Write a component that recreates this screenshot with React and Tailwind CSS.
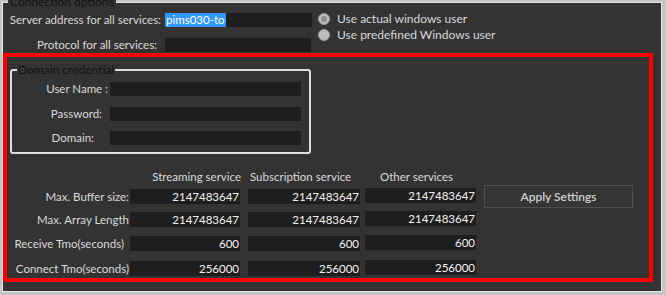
import React from "react";

const font = { fontFamily: 'Lato, "Open Sans", Arial, sans-serif' };

const Field = ({ w, value, className = "" }) => (
  <div
    className={`h-[15px] ${w} bg-[#1e1e1e] text-right text-[11.5px] leading-[15px] text-[#f4f4f4] pr-[1px] ${className}`}
  >
    {value}
  </div>
);

const Radio = ({ checked, label }) => (
  <div className="flex items-center h-[16px]">
    <div className="w-[12px] h-[12px] rounded-full bg-[#bdbdbd] border border-[#9a9a9a] flex items-center justify-center">
      <div
        className={`w-[6px] h-[6px] rounded-full ${checked ? "bg-[#8c8c8c]" : "bg-[#bdbdbd]"}`}
      />
    </div>
    <span className="ml-[7px] text-[12px] leading-[14px] text-[#dadada]">{label}</span>
  </div>
);

const rows = [
  { label: "Max. Buffer size:", pr: "pr-[1px]", vals: ["2147483647", "2147483647", "2147483647"] },
  { label: "Max. Array Length", pr: "pr-[1px]", vals: ["2147483647", "2147483647", "2147483647"] },
  { label: "Receive Tmo(seconds)", pr: "pr-[6px]", vals: ["600", "600", "600"] },
  { label: "Connect Tmo(seconds)", pr: "pr-[1px]", vals: ["256000", "256000", "256000"] },
];

const rowMargins = ["mt-[4px]", "mt-[9px]", "mt-[10px]"];

const txt = "text-[11.5px] leading-[14px] text-[#dadada]";

export default function App() {
  return (
    <div className="w-[666px] h-[295px] bg-[#c6c6c6] pt-[2px] pl-[2px] pr-[4px] pb-[3px]" style={font}>
      <div className="relative h-full bg-[#333333] border border-[#e2e2e2]">
        <span className="absolute left-[5px] top-[-8px] px-[2px] bg-[#333333] text-[12px] leading-[14px] text-[#111111]">
          Connection options
        </span>

        {/* top section */}
        <div className="flex pt-[10px]">
          <div className="flex flex-col ml-[6px]">
            <div className="flex items-center h-[14px]">
              <span className={`w-[152px] text-right whitespace-nowrap ${txt}`}>
                Server address for all services:
              </span>
              <div className="ml-[4px] w-[147px] h-[14px] bg-[#1e1e1e] flex">
                <span className="bg-[#3297fd] text-white text-[11.5px] leading-[14px] px-[1px]">pims030-to</span>
              </div>
            </div>
            <div className="flex items-center h-[14px] mt-[11px]">
              <span className={`w-[148px] text-right whitespace-nowrap ${txt}`}>
                Protocol for all services:
              </span>
              <div className="ml-[8px] w-[146px] h-[14px] bg-[#1e1e1e]" />
            </div>
          </div>
          <div className="ml-[6px] -mt-[2px] flex flex-col">
            <Radio checked label="Use actual windows user" />
            <Radio label="Use predefined Windows user" />
          </div>
        </div>

        {/* highlighted region */}
        <div className="mt-[1px] w-[650px] h-[229px] border-4 border-[#ff0000]">
          <div className="relative ml-[3px] mt-[12px] w-[301px] h-[85px] border-2 border-[#dedede] rounded-[3px]">
            <span className="absolute left-[5px] top-[-8px] px-[1px] bg-[#333333] text-[12px] leading-[14px] text-[#111111]">
              Domain credential
            </span>
            <div className="flex items-center h-[14px] mt-[11px]">
              <span className={`w-[98px] text-right pr-[2px] ${txt}`}>User Name :</span>
              <div className="w-[191px] h-[14px] bg-[#1e1e1e]" />
            </div>
            <div className="flex items-center h-[14px] mt-[11px]">
              <span className={`w-[98px] text-right pr-[8px] ${txt}`}>Password:</span>
              <div className="w-[191px] h-[14px] bg-[#1e1e1e]" />
            </div>
            <div className="flex items-center h-[14px] mt-[10px]">
              <span className={`w-[98px] text-right pr-[16px] ${txt}`}>Domain:</span>
              <div className="w-[191px] h-[14px] bg-[#1e1e1e]" />
            </div>
          </div>

          {/* settings table */}
          <div className={`flex mt-[16px] h-[14px] items-center whitespace-nowrap ${txt}`}>
            <div className="w-[123px]" />
            <div className="w-[111px] text-right">Streaming service</div>
            <div className="ml-[8px] w-[112px] pl-[1px]">Subscription service</div>
            <div className="ml-[5px] w-[111px] pl-[14px]">Other services</div>
          </div>

          {rows.map((r, i) => (
            <div
              key={r.label}
              className={`flex items-center ${i === 0 ? "mt-[1px] h-[23px]" : `${rowMargins[i - 1]} h-[15px]`}`}
            >
              <div className={`w-[123px] text-right whitespace-nowrap ${r.pr} ${txt}`}>
                {r.label}
              </div>
              <Field w="w-[110px]" value={r.vals[0]} />
              <Field w="w-[112px]" value={r.vals[1]} className="ml-[8px]" />
              <Field w="w-[111px]" value={r.vals[2]} className="ml-[5px] mb-[3px]" />
              {i === 0 && (
                <button className="ml-[8px] w-[149px] h-[23px] bg-[#353535] border border-[#4e4e4e] text-[12px] text-[#cfcfcf] font-semibold">
                  Apply Settings
                </button>
              )}
            </div>
          ))}
        </div>
      </div>
    </div>
  );
}
